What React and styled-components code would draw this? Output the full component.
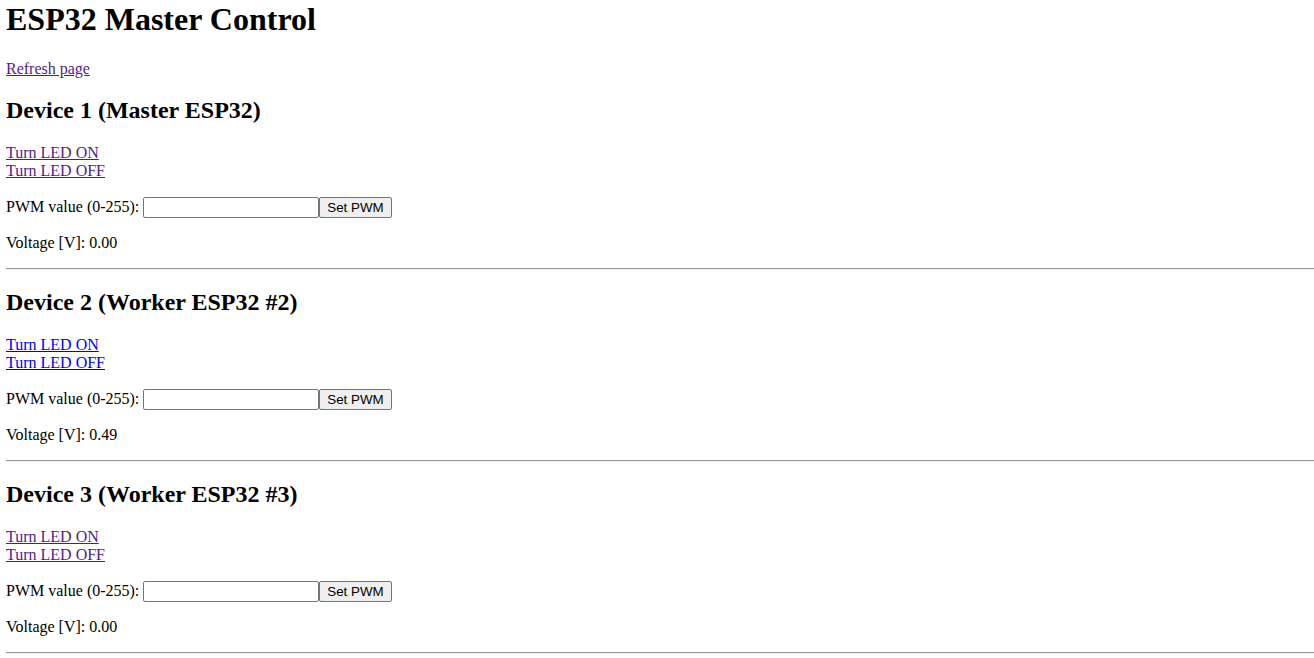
import styled, { createGlobalStyle } from "styled-components";

const GlobalStyle = createGlobalStyle`
  body {
    margin: 0 0 8px 6px;
    font-family: "Liberation Serif", "Times New Roman", serif;
    font-size: 16px;
    color: #000;
    background: #fff;
  }
`;

const devices = [
  { name: "Device 1 (Master ESP32)", voltage: "0.00", visited: true },
  { name: "Device 2 (Worker ESP32 #2)", voltage: "0.49", visited: false },
  { name: "Device 3 (Worker ESP32 #3)", voltage: "0.00", visited: true },
];

const App = () => {
  return (
    <Page>
      <GlobalStyle />
      <Title>ESP32 Master Control</Title>
      <RefreshRow>
        <TextLink href="#" $visited>
          Refresh page
        </TextLink>
      </RefreshRow>
      {devices.map((d) => (
        <Device key={d.name} {...d} />
      ))}
    </Page>
  );
};

const Device = ({ name, voltage, visited }) => {
  return (
    <section>
      <Heading>{name}</Heading>
      <Para>
        <TextLink href="#" $visited={visited}>
          Turn LED ON
        </TextLink>
        <br />
        <TextLink href="#" $visited={visited}>
          Turn LED OFF
        </TextLink>
      </Para>
      <PwmForm onSubmit={(e) => e.preventDefault()}>
        PWM value (0-255): <ValueInput type="text" />
        <SubmitButton type="submit">Set PWM</SubmitButton>
      </PwmForm>
      <Para>Voltage [V]: {voltage}</Para>
      <Rule />
    </section>
  );
};

export default App;

const Page = styled.div`
  display: flow-root;
  padding-top: 1px;
`;

const Title = styled.h1`
  font-size: 32px;
  font-weight: bold;
  margin: 0 0 21.5px;
`;

const Heading = styled.h2`
  font-size: 24px;
  font-weight: bold;
  margin: 18.4px 0 20.5px;
`;

const Para = styled.p`
  margin: 16px 0;
`;

const RefreshRow = styled(Para)`
  margin-bottom: 19.4px;
`;

const PwmForm = styled.form`
  margin: 17px 0 15.5px;
  line-height: 18px;
`;

const TextLink = styled.a`
  color: ${(p) => (p.$visited ? "#551a8b" : "#0000ee")};
  text-decoration: underline;
  cursor: pointer;
`;

const ValueInput = styled.input`
  font-family: "Liberation Sans", Arial, sans-serif;
  font-size: 13.33px;
  width: 170px;
  padding: 1px 2px;
  border: 1px solid #767676;
  border-radius: 2px;
  height: 17px;
  box-sizing: content-box;
  vertical-align: baseline;
`;

const SubmitButton = styled.button`
  font-family: "Liberation Sans", Arial, sans-serif;
  font-size: 13.33px;
  padding: 1px 7px;
  border: 1px solid #767676;
  border-radius: 2px;
  background: #efefef;
  color: #000;
  height: 21px;
`;

const Rule = styled.hr`
  border: none;
  border-top: 1px solid #9a9a9a;
  border-bottom: 1px solid #eee;
  margin: 8px 0;
`;
